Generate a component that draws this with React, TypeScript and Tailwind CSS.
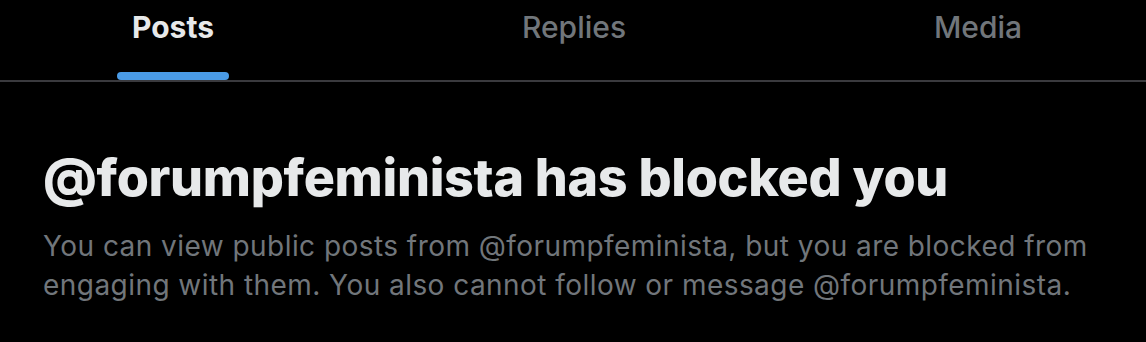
import React from 'react';

const tabs = [
  { label: 'Posts', width: 'w-[346px]', active: true },
  { label: 'Replies', width: 'w-[456px]', active: false },
  { label: 'Media', width: 'w-[352px]', active: false },
];

const App: React.FC = () => {
  return (
    <div className="w-[1146px] h-[342px] bg-black overflow-hidden" style={{ fontFamily: 'Inter, "Liberation Sans", sans-serif' }}>
      {/* Tabs */}
      <div className="flex h-[82px] border-b-2 border-[#3a3a3e]">
        {tabs.map((tab) => (
          <div key={tab.label} className={`${tab.width} shrink-0 flex flex-col items-center`}>
            <div
              className={`pt-[9px] h-[72px] text-[30px] leading-[36px] ${
                tab.active ? 'font-bold text-[#e7e9ea]' : 'font-medium text-[#71767b]'
              }`}
            >
              {tab.label}
            </div>
            {tab.active && <div className="w-[112px] h-[8px] rounded-full bg-[#4a9be6]" />}
          </div>
        ))}
      </div>

      {/* Blocked notice */}
      <div className="px-[43px] pt-[66px]">
        <h1 className="text-[52px] leading-[60px] font-extrabold text-[#e7e9ea] tracking-[-0.3px] whitespace-nowrap">
          @forumpfeminista has blocked you
        </h1>
        <p className="mt-[19px] text-[28px] leading-[39px] text-[#71767b] tracking-[0.45px]">
          You can view public posts from @forumpfeminista, but you are blocked from engaging with them. You also cannot
          follow or message @forumpfeminista.
        </p>
      </div>
    </div>
  );
};

export default App;
